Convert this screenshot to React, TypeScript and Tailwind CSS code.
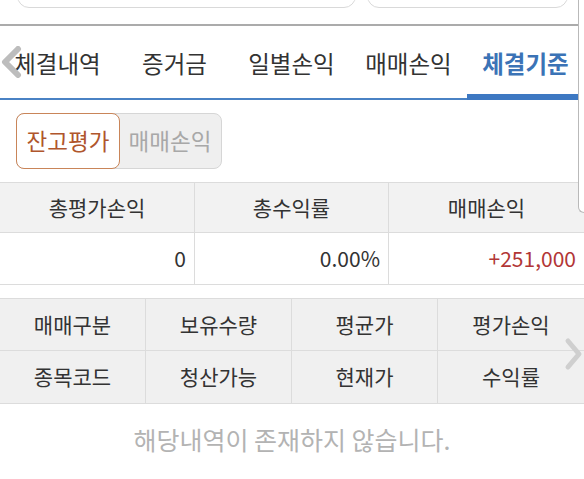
import React, { useState } from 'react';

const tabs = ['체결내역', '증거금', '일별손익', '매매손익', '체결기준'];

const summary = [
  { label: '총평가손익', value: '0', tone: 'text-[#333]' },
  { label: '총수익률', value: '0.00%', tone: 'text-[#333]' },
  { label: '매매손익', value: '+251,000', tone: 'text-[#b23636]' },
];

const headRows = [
  ['매매구분', '보유수량', '평균가', '평가손익'],
  ['종목코드', '청산가능', '현재가', '수익률'],
];

const App = () => {
  const [tab, setTab] = useState(4);
  const [mode, setMode] = useState(0);

  return (
    <div className="relative w-[584px] h-[479px] overflow-hidden bg-white font-['Noto_Sans_CJK_KR','Noto_Sans',sans-serif] text-[#333]">
      {/* search boxes, cut off at the top */}
      <div className="flex h-[26px] gap-[11px] pl-[17px] border-b-2 border-[#ababab]">
        <div className="w-[339px] h-[30px] -mt-[22px] rounded-[12px] border border-[#d9d9d9]" />
        <div className="w-[201px] h-[30px] -mt-[22px] rounded-[12px] border border-[#d9d9d9]" />
      </div>

      {/* tabs */}
      <div className="relative border-b-2 border-[#4a82c4]">
        <div className="flex h-[72px] -ml-[1px]">
          {tabs.map((t, i) => (
            <button
              key={t}
              onClick={() => setTab(i)}
              className={`relative w-[117px] shrink-0 flex items-center justify-center pt-[3px] text-[23.5px] ${
                tab === i ? 'font-bold text-[#3b73b6]' : 'text-[#333]'
              }`}
            >
              {t}
              {tab === i && <span className="absolute left-0 right-0 -bottom-[2px] h-[6px] bg-[#3d78c2]" />}
            </button>
          ))}
        </div>
        <svg className="absolute left-0 top-[20px]" width="22" height="32" viewBox="0 0 22 32">
          <polyline points="18,3 5,16 18,29" fill="none" stroke="#bdbdbd" strokeWidth="6" strokeLinecap="round" strokeLinejoin="round" />
        </svg>
      </div>

      {/* segmented toggle */}
      <div className="px-[16px] pt-[13px] pb-[13px]">
        <div className="flex w-[206px] h-[56px] rounded-[8px] border border-[#d6d6d6] bg-[#efefef] text-[22.5px]">
          <button
            onClick={() => setMode(0)}
            className={`flex-1 rounded-[8px] ${mode === 0 ? 'border border-[#c98559] bg-white text-[#b0562c] -m-[1px]' : 'text-[#a8a8a8]'}`}
          >
            잔고평가
          </button>
          <button
            onClick={() => setMode(1)}
            className={`flex-1 rounded-[8px] ${mode === 1 ? 'border border-[#c98559] bg-white text-[#b0562c] -m-[1px]' : 'text-[#a8a8a8]'}`}
          >
            매매손익
          </button>
        </div>
      </div>

      {/* summary */}
      <div className="grid grid-cols-[195px_194px_195px] border-t border-b border-[#dcdcdc] text-[21px]">
        {summary.map((s, i) => (
          <div key={s.label} className={`h-[50px] flex items-center justify-center bg-[#f2f2f2] border-b border-[#dcdcdc] ${i < 2 ? 'border-r' : ''}`}>
            {s.label}
          </div>
        ))}
        {summary.map((s, i) => (
          <div key={s.label + 'v'} className={`h-[51px] flex items-center justify-end pr-[8px] border-[#dcdcdc] ${s.tone} ${i < 2 ? 'border-r' : ''}`}>
            {s.value}
          </div>
        ))}
      </div>

      {/* list header */}
      <div className="mt-[13px] grid grid-cols-4 border-t border-b border-[#dcdcdc] bg-[#f0f0f0] text-[21px]">
        {headRows.map((row, r) =>
          row.map((c, i) => (
            <div
              key={c}
              className={`flex items-center justify-center border-[#dcdcdc] ${i < 3 ? 'border-r' : ''} ${
                r === 0 ? 'h-[52px] border-b' : 'h-[52px]'
              }`}
            >
              {c}
            </div>
          ))
        )}
      </div>

      <div className="h-[72px] flex items-center justify-center text-[25px] text-[#b3b3b3]">
        해당내역이 존재하지 않습니다.
      </div>

      {/* right side overlay edge + scroll hint */}
      <div className="absolute left-[578px] -top-[10px] w-[20px] h-[223px] bg-white border-l border-b border-[#b9b9b9] rounded-bl-[6px]" />
      <svg className="absolute left-[564px] top-[337px]" width="20" height="34" viewBox="0 0 20 34">
        <polyline points="4,4 15,17 4,30" fill="none" stroke="#cfcfcf" strokeWidth="5" strokeLinecap="round" strokeLinejoin="round" />
      </svg>
    </div>
  );
};

export default App;
